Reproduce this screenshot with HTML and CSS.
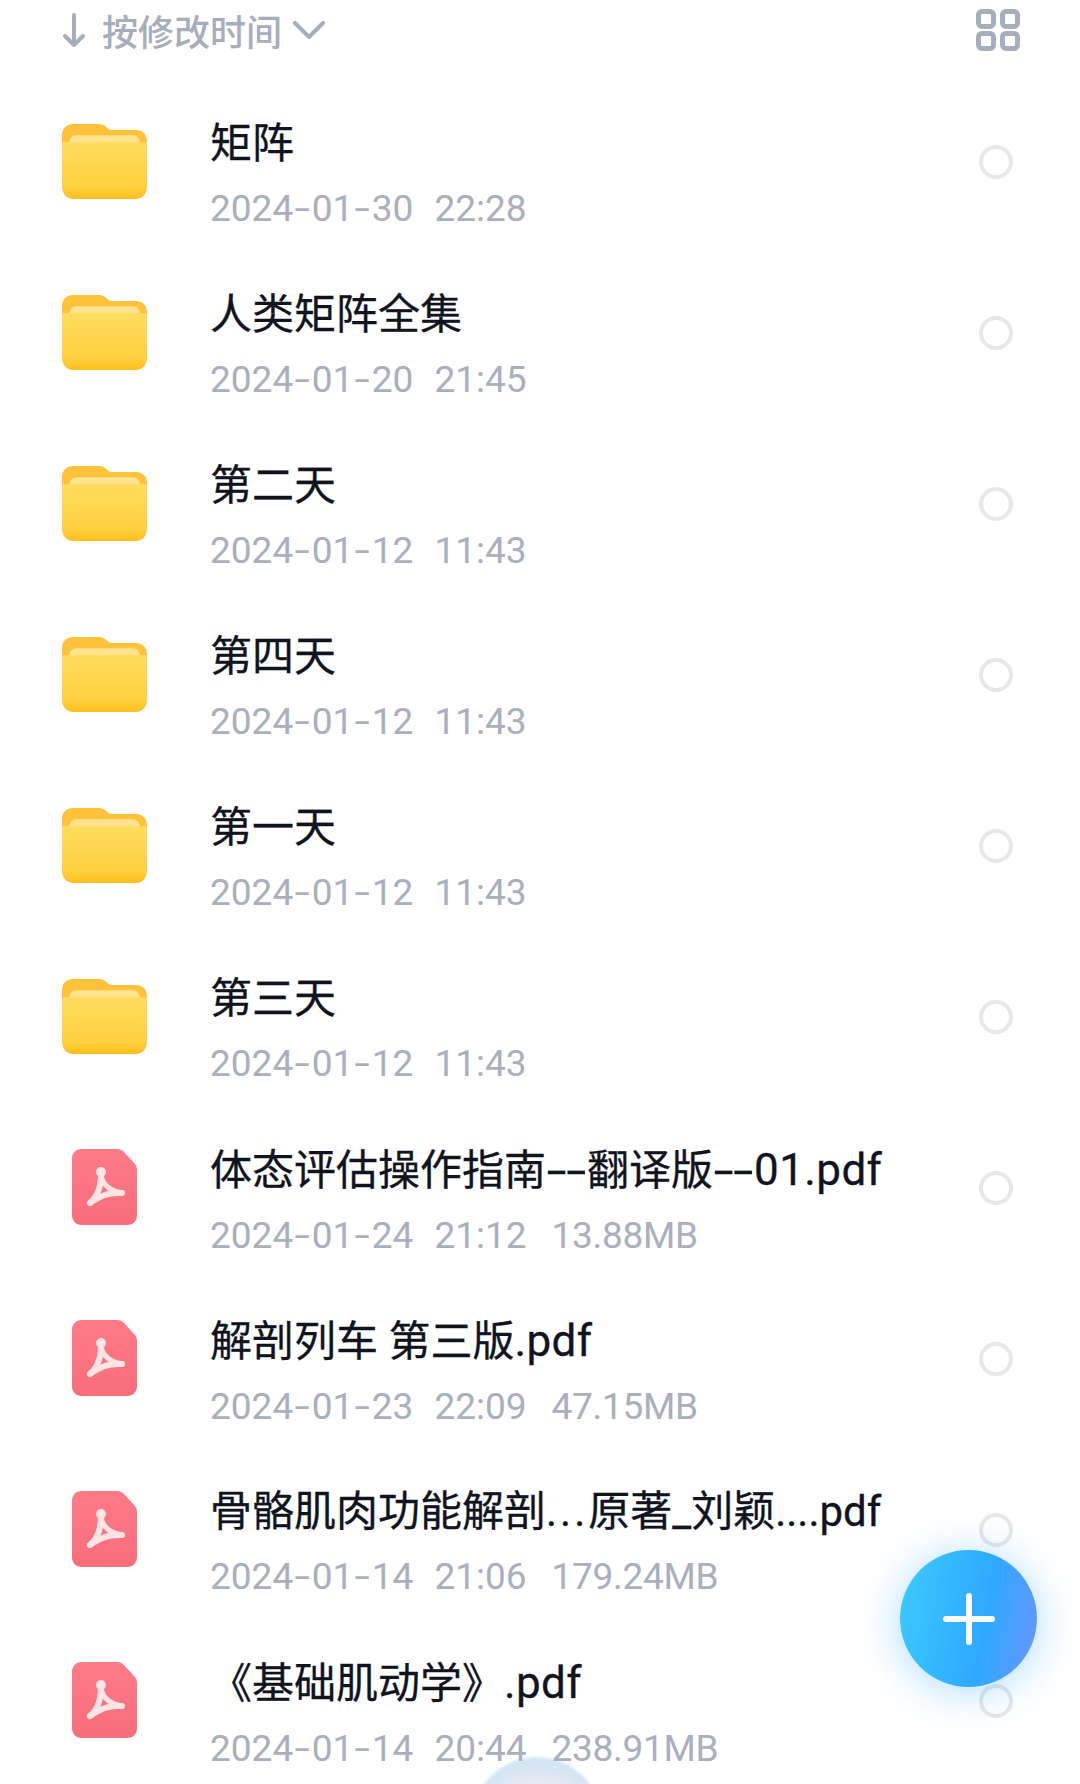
FILE: index.html
```html
<!DOCTYPE html>
<html lang="zh-CN">
<head>
    <meta charset="UTF-8">
    <meta name="viewport" content="width=device-width, initial-scale=1.0">
    <title>文件列表</title>
    <link rel="stylesheet" href="styles.css">
</head>
<body>
    <svg class="defs" width="0" height="0">
        <defs>
            <linearGradient id="folderFront" x1="0" y1="0" x2="0" y2="1">
                <stop offset="0" stop-color="#ffdc5e"/>
                <stop offset="0.78" stop-color="#ffd03f"/>
                <stop offset="1" stop-color="#ffbf1e"/>
            </linearGradient>
            <linearGradient id="pdfBack" x1="0" y1="0" x2="0" y2="1">
                <stop offset="0" stop-color="#fd7b88"/>
                <stop offset="1" stop-color="#f96d79"/>
            </linearGradient>
            <symbol id="icoFolder" viewBox="0 1 86 75" preserveAspectRatio="none">
                <path d="M0 12C0 5 5 1 11 1H37C41 1 43 2 46 5C48 7 50 7 53 7H75C81 7 86 11 86 18V40H0Z" fill="#ffc23a"/>
                <path d="M7 22C7 15 10 12 15 12H71C76 12 79 15 79 22V30H7Z" fill="#ffe38e"/>
                <path d="M0 19H86V63C86 70 81 75 75 75H11C5 75 0 70 0 63Z" fill="url(#folderFront)"/>
            </symbol>
            <symbol id="icoPdf" viewBox="0 0 65 76">
                <path d="M10 0H45C48 0 50 1 52 3L62 14C64 16 65 18 65 21V66C65 72 61 76 55 76H10C4 76 0 72 0 66V10C0 4 4 0 10 0Z" fill="url(#pdfBack)"/>
                <g fill="none" stroke="#ffe4e4" stroke-linecap="round">
                    <path d="M29 23C29 33 34 41 50 44" stroke-width="5"/>
                    <path d="M29 23C29 36 27 46 18 54" stroke-width="6"/>
                    <path d="M18 54C27 47 36 43 50 44" stroke-width="6"/>
                </g>
                <circle cx="29" cy="23" r="5" fill="#ffe4e4"/>
            </symbol>
        </defs>
    </svg>

    <div class="telefone">
        <div class="bolha"></div>

        <div class="barra-topo">
            <div class="ordenar">
                <svg class="seta" viewBox="0 0 24 34"><path d="M12 2V32M3 23L12 32L21 23" fill="none" stroke="#a6adbb" stroke-width="4" stroke-linecap="round" stroke-linejoin="round"/></svg>
                <span>按修改时间</span>
                <svg class="chevron" viewBox="0 0 32 18"><path d="M2 2L16 16L30 2" fill="none" stroke="#a6adbb" stroke-width="4" stroke-linecap="round" stroke-linejoin="round"/></svg>
            </div>
            <div class="grade">
                <i></i><i></i><i></i><i></i>
            </div>
        </div>

        <ul class="lista">
            <li class="item">
                <div class="item-ico"><svg class="ico-pasta"><use href="#icoFolder"/></svg></div>
                <div class="item-info"><div class="nome">矩阵</div><div class="meta"><span>2024<i>-</i>01<i>-</i>30</span><span>22:28</span></div></div>
                <div class="radio"></div>
            </li>
            <li class="item">
                <div class="item-ico"><svg class="ico-pasta"><use href="#icoFolder"/></svg></div>
                <div class="item-info"><div class="nome">人类矩阵全集</div><div class="meta"><span>2024<i>-</i>01<i>-</i>20</span><span>21:45</span></div></div>
                <div class="radio"></div>
            </li>
            <li class="item">
                <div class="item-ico"><svg class="ico-pasta"><use href="#icoFolder"/></svg></div>
                <div class="item-info"><div class="nome">第二天</div><div class="meta"><span>2024<i>-</i>01<i>-</i>12</span><span>11:43</span></div></div>
                <div class="radio"></div>
            </li>
            <li class="item">
                <div class="item-ico"><svg class="ico-pasta"><use href="#icoFolder"/></svg></div>
                <div class="item-info"><div class="nome">第四天</div><div class="meta"><span>2024<i>-</i>01<i>-</i>12</span><span>11:43</span></div></div>
                <div class="radio"></div>
            </li>
            <li class="item">
                <div class="item-ico"><svg class="ico-pasta"><use href="#icoFolder"/></svg></div>
                <div class="item-info"><div class="nome">第一天</div><div class="meta"><span>2024<i>-</i>01<i>-</i>12</span><span>11:43</span></div></div>
                <div class="radio"></div>
            </li>
            <li class="item">
                <div class="item-ico"><svg class="ico-pasta"><use href="#icoFolder"/></svg></div>
                <div class="item-info"><div class="nome">第三天</div><div class="meta"><span>2024<i>-</i>01<i>-</i>12</span><span>11:43</span></div></div>
                <div class="radio"></div>
            </li>
            <li class="item">
                <div class="item-ico"><svg class="ico-pdf"><use href="#icoPdf"/></svg></div>
                <div class="item-info"><div class="nome">体态评估操作指南<i>--</i>翻译版<i>--</i><b>01.pdf</b></div><div class="meta"><span>2024<i>-</i>01<i>-</i>24</span><span>21:12</span><span>13.88MB</span></div></div>
                <div class="radio"></div>
            </li>
            <li class="item">
                <div class="item-ico"><svg class="ico-pdf"><use href="#icoPdf"/></svg></div>
                <div class="item-info"><div class="nome">解剖列车 第三版<b>.pdf</b></div><div class="meta"><span>2024<i>-</i>01<i>-</i>23</span><span>22:09</span><span>47.15MB</span></div></div>
                <div class="radio"></div>
            </li>
            <li class="item">
                <div class="item-ico"><svg class="ico-pdf"><use href="#icoPdf"/></svg></div>
                <div class="item-info"><div class="nome">骨骼肌肉功能解剖<b class="pontos">...</b>原著_刘颖....pdf</div><div class="meta"><span>2024<i>-</i>01<i>-</i>14</span><span>21:06</span><span>179.24MB</span></div></div>
                <div class="radio"></div>
            </li>
            <li class="item">
                <div class="item-ico"><svg class="ico-pdf"><use href="#icoPdf"/></svg></div>
                <div class="item-info"><div class="nome">《基础肌动学》<b>.pdf</b></div><div class="meta"><span>2024<i>-</i>01<i>-</i>14</span><span>20:44</span><span>238.91MB</span></div></div>
                <div class="radio"></div>
            </li>
        </ul>

        <div class="btn-flutuante">
            <svg viewBox="0 0 52 52"><path d="M26 3V49M3 26H49" fill="none" stroke="#fff" stroke-width="6" stroke-linecap="round"/></svg>
        </div>
    </div>
</body>
</html>
```

FILE: styles.css
```css
* {
    box-sizing: border-box;
}

body {
    margin: 0;
    padding: 0;
    background-color: #fff;
    font-family: Roboto, "Noto Sans CJK SC", sans-serif;
}

.defs {
    position: absolute;
}

.telefone {
    position: relative;
    width: 1080px;
    height: 1784px;
    overflow: hidden;
    background: #fff;
}

/* Barra de ordenacao */
.barra-topo {
    display: flex;
    justify-content: space-between;
    align-items: center;
    height: 76px;
    padding: 0 60px 16px 62px;
}

.ordenar {
    display: flex;
    align-items: center;
    color: #a6adbb;
    font-size: 36px;
    font-weight: 500;
}

.seta {
    width: 24px;
    height: 34px;
    margin-right: 16px;
}

.chevron {
    width: 32px;
    height: 18px;
    margin-left: 11px;
}

.grade {
    display: grid;
    grid-template-columns: 20px 20px;
    gap: 2px 4px;
}

.grade i {
    display: block;
    width: 20px;
    height: 20px;
    border: 5px solid #a6adbb;
    border-radius: 6px;
}

/* Lista de arquivos */
.lista {
    position: relative;
    list-style: none;
    margin: 0;
    padding: 0;
}

.item {
    display: flex;
    align-items: center;
    height: 171px;
    padding: 0 67px 0 62px;
}

.item-ico {
    display: flex;
    justify-content: center;
    width: 85px;
    margin-right: 63px;
    flex-shrink: 0;
}

.ico-pasta {
    width: 85px;
    height: 76px;
}

.ico-pdf {
    width: 65px;
    height: 76px;
    margin-top: -2px;
}

.item-info {
    flex: 1;
    min-width: 0;
    margin-top: 26px;
}

.nome {
    color: #10141e;
    font-size: 42px;
    line-height: 56px;
    white-space: nowrap;
    -webkit-text-stroke: 0.3px #10141e;
}

/* traco largo como na fonte do aparelho */
.nome i {
    display: inline-block;
    width: 41px;
    font-style: normal;
    text-align: center;
    transform: scaleX(1.7);
}

.nome b {
    font-weight: 400;
    font-size: 44px;
    letter-spacing: 0.4px;
}

.nome b.pontos {
    font-size: 42px;
    letter-spacing: 3px;
}

.meta {
    display: flex;
    gap: 21px;
    margin-top: 13px;
    color: #a9afbc;
    font-size: 37px;
    line-height: 48px;
}

.meta i {
    display: inline-block;
    width: 18.5px;
    font-style: normal;
    text-align: center;
    transform: scaleX(1.5);
}

.meta span:nth-child(3) {
    margin-left: 4px;
    letter-spacing: -0.3px;
}

.radio {
    width: 34px;
    height: 34px;
    border: 4px solid #e6e7e9;
    border-radius: 50%;
    flex-shrink: 0;
}

/* Botao flutuante */
.btn-flutuante {
    position: absolute;
    left: 900px;
    top: 1550px;
    width: 137px;
    height: 137px;
    display: flex;
    align-items: center;
    justify-content: center;
    border-radius: 50%;
    background: linear-gradient(100deg, #3ccaff 0%, #2ea8ff 62%, #6d93ff 100%);
    box-shadow: 0 4px 40px rgba(60, 170, 255, 0.42);
}

.btn-flutuante svg {
    width: 52px;
    height: 52px;
}

.bolha {
    position: absolute;
    left: 472px;
    top: 1757px;
    width: 130px;
    height: 130px;
    border-radius: 50%;
    background: radial-gradient(circle at 50% 62%, #fbeef1 0 38%, #d3e4f3 72%, #e4edf5 100%);
    filter: blur(1.5px);
}
```
